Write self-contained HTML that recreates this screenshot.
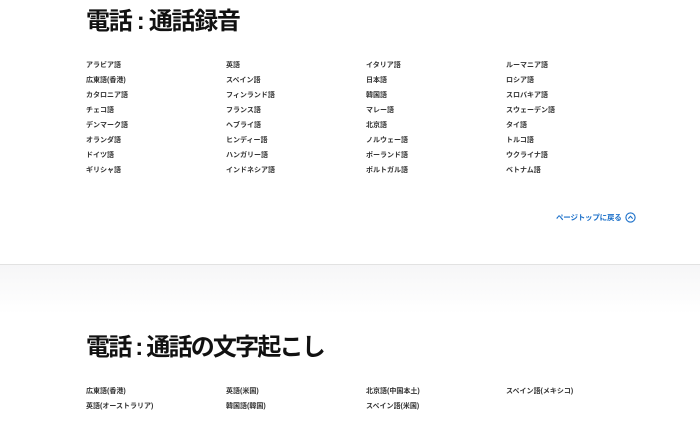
<!DOCTYPE html><html><head><meta charset="utf-8"><style>
*{margin:0;padding:0;box-sizing:border-box}
body{width:700px;height:424px;overflow:hidden;background:#fff;font-family:"Liberation Sans","Noto Sans CJK JP",sans-serif;color:#222;position:relative}
h2{position:absolute;left:86px;font-size:24px;font-weight:bold;line-height:1;color:#111;letter-spacing:-1.3px}
.it{position:absolute;font-size:7px;font-weight:bold;color:#333;line-height:1;white-space:nowrap}
.gray{position:absolute;left:0;top:264px;width:700px;height:50px;border-top:1px solid #e2e2e2;background:linear-gradient(#f6f6f7,#fff)}
.lnk{position:absolute;left:556px;top:213px;font-size:7.5px;font-weight:bold;color:#1a6fc9;line-height:10px;white-space:nowrap;letter-spacing:-0.2px}
.lnk svg{vertical-align:middle;margin-left:3px;margin-top:-2px}
</style></head><body>
<h2 style="top:10px">電話 : 通話録音</h2>
<div id="a"></div>
<div class="lnk">ページトップに戻る<svg width="11" height="11" viewBox="0 0 11 11"><circle cx="5.5" cy="5.5" r="4.6" fill="none" stroke="#1a6fc9" stroke-width="1.1"/><path d="M3.3 6.6 5.5 4.3 7.7 6.6" fill="none" stroke="#1a6fc9" stroke-width="1.1"/></svg></div>
<div class="gray"></div>
<h2 style="top:336px;letter-spacing:-1.8px">電話 : 通話の文字起こし</h2>
<script>
var c=[["アラビア語","広東語(香港)","カタロニア語","チェコ語","デンマーク語","オランダ語","ドイツ語","ギリシャ語"],["英語","スペイン語","フィンランド語","フランス語","ヘブライ語","ヒンディー語","ハンガリー語","インドネシア語"],["イタリア語","日本語","韓国語","マレー語","北京語","ノルウェー語","ポーランド語","ポルトガル語"],["ルーマニア語","ロシア語","スロバキア語","スウェーデン語","タイ語","トルコ語","ウクライナ語","ベトナム語"]];
var d=[["広東語(香港)","英語(オーストラリア)"],["英語(米国)","韓国語(韓国)"],["北京語(中国本土)","スペイン語(米国)"],["スペイン語(メキシコ)"]];
var x=[86,226,366,506],h="";
c.forEach(function(col,i){col.forEach(function(t,j){h+='<div class="it" style="left:'+x[i]+'px;top:'+(62+15*j)+'px">'+t+'</div>'})});
d.forEach(function(col,i){col.forEach(function(t,j){h+='<div class="it" style="left:'+x[i]+'px;top:'+(388+15*j)+'px">'+t+'</div>'})});
document.getElementById('a').innerHTML=h;
</script>
</body></html>
